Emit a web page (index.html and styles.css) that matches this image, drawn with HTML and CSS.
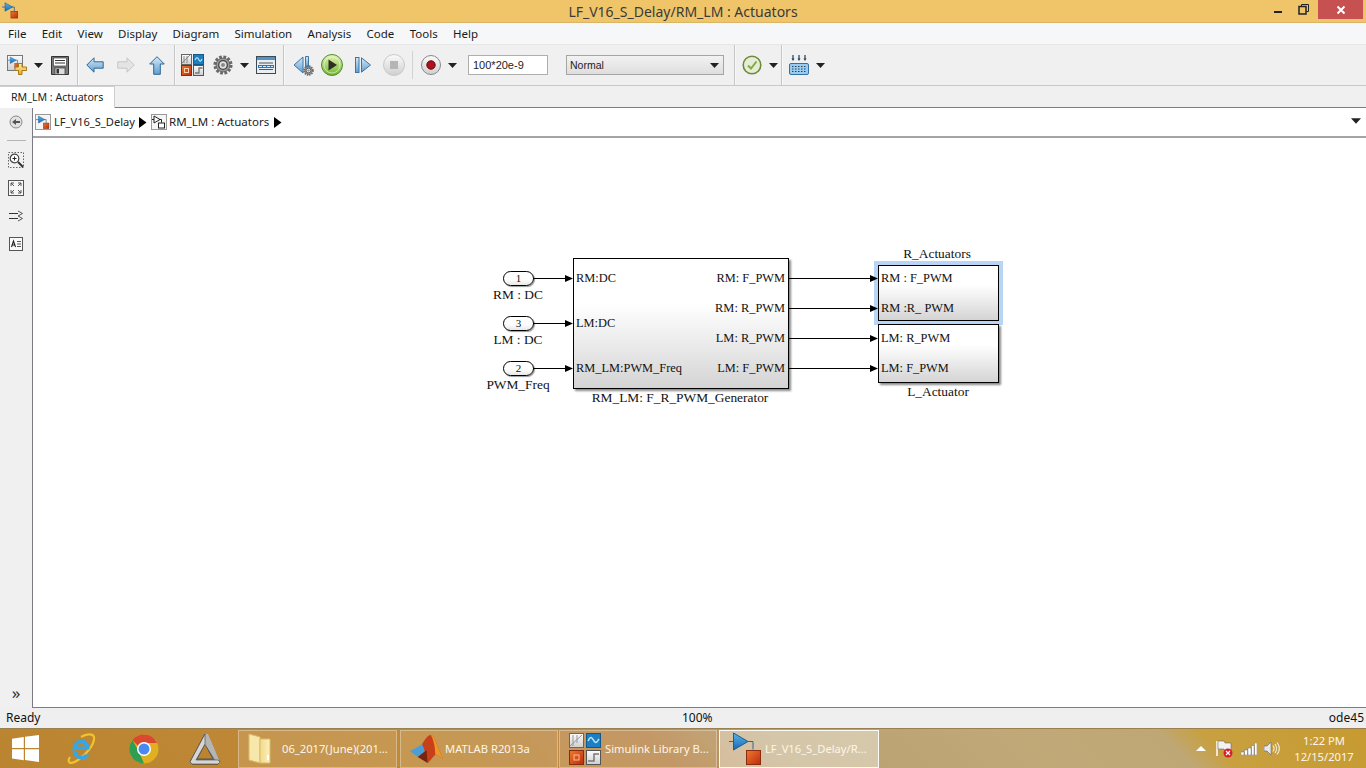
FILE: index.html
```html
<!DOCTYPE html>
<html lang="en">
<head>
<meta charset="utf-8">
<title>LF_V16_S_Delay/RM_LM : Actuators</title>
<link rel="stylesheet" href="styles.css">
</head>
<body>
<svg class="defs" width="0" height="0" aria-hidden="true">
  <defs>
    <linearGradient id="gBlue" x1="0" y1="0" x2="0" y2="1"><stop offset="0" stop-color="#d6e8f6"/><stop offset="1" stop-color="#5f9fd0"/></linearGradient>
    <linearGradient id="gTri" x1="0" y1="0" x2="0" y2="1"><stop offset="0" stop-color="#5bb4ea"/><stop offset="1" stop-color="#1469b4"/></linearGradient>
    <linearGradient id="gRed" x1="0" y1="0" x2="1" y2="1"><stop offset="0" stop-color="#ef7a2c"/><stop offset="1" stop-color="#bb2a10"/></linearGradient>
    <linearGradient id="gGreen" x1="0" y1="0" x2="0" y2="1"><stop offset="0" stop-color="#e6f5b8"/><stop offset="1" stop-color="#6fb52c"/></linearGradient>
    <linearGradient id="gGrey" x1="0" y1="0" x2="0" y2="1"><stop offset="0" stop-color="#fbfbfb"/><stop offset="1" stop-color="#cfcfcf"/></linearGradient>
    <linearGradient id="gYellow" x1="0" y1="0" x2="0" y2="1"><stop offset="0" stop-color="#fff1a8"/><stop offset="1" stop-color="#e8a920"/></linearGradient>
    <linearGradient id="gFolder" x1="0" y1="0" x2="1" y2="0"><stop offset="0" stop-color="#f2d98a"/><stop offset="1" stop-color="#fdf0bd"/></linearGradient>
    <symbol id="sl" viewBox="0 0 20 20">
      <path d="M0 6.500h4M11 6.500h3.500v6" fill="none" stroke="#35678f" stroke-width="1"/>
      <path d="M3.500 1.500 12.500 6.500 3.500 11.500Z" fill="url(#gTri)" stroke="#1b5d98" stroke-width=".7"/>
      <rect x="10.500" y="11.500" width="8" height="8" fill="url(#gRed)" stroke="#8a2b10" stroke-width=".7"/>
    </symbol>
    <symbol id="caret" viewBox="0 0 9 5"><path d="M0 0h9L4.500 5Z" fill="#222"/></symbol>
    <symbol id="crumb" viewBox="0 0 8 11"><path d="M0 0 7.500 5.500 0 11Z" fill="#000"/></symbol>
    <symbol id="gear" viewBox="0 0 20 20">
      <circle cx="10" cy="10" r="7.800" fill="none" stroke="#6a6a6a" stroke-width="3.600" stroke-dasharray="2.600 1.500"/>
      <circle cx="10" cy="10" r="7" fill="#9a9a9a" stroke="#555" stroke-width=".8"/>
      <circle cx="10" cy="10" r="4.300" fill="#e4e4e4" stroke="#444" stroke-width="1.300"/>
      <circle cx="10" cy="10" r="2" fill="#8a8a8a"/>
    </symbol>
  </defs>
</svg>

<div class="app">
  <header class="titlebar">
    <svg class="title-icon"><use href="#sl"/></svg>
    <h1 class="title-text">LF_V16_S_Delay/RM_LM : Actuators</h1>
    <div class="winctl">
      <span class="win-min"></span>
      <span class="win-max"><svg width="11" height="11" viewBox="0 0 11 11"><path d="M3.500 2V.5h7v7H8.500" fill="none" stroke="#222"/><rect x="1" y="2.500" width="7" height="7.500" fill="none" stroke="#222" stroke-width="1.500"/></svg></span>
      <span class="win-close"><svg width="10" height="10" viewBox="0 0 10 10"><path d="M1.500 1.500l7 7M8.500 1.500l-7 7" stroke="#fff" stroke-width="2"/></svg></span>
    </div>
  </header>

  <nav class="menubar">
    <span class="menu-item">File</span><span class="menu-item">Edit</span><span class="menu-item">View</span><span class="menu-item">Display</span><span class="menu-item">Diagram</span><span class="menu-item">Simulation</span><span class="menu-item">Analysis</span><span class="menu-item">Code</span><span class="menu-item">Tools</span><span class="menu-item">Help</span>
  </nav>

  <div class="toolbar">
    <svg class="tool ml7" width="20" height="20" viewBox="0 0 20 20"><rect x=".5" y=".5" width="15" height="15" fill="url(#gGrey)" stroke="#777"/><use href="#sl" x="1" y="1" width="13" height="13"/><path d="M11.500 8.500h3.500v3.500h4.500v3.500H15v4h-3.500v-4H8v-3.500h3.500Z" fill="url(#gYellow)" stroke="#a9791a"/></svg>
    <svg class="caret ml7"><use href="#caret"/></svg>
    <svg class="tool ml8" width="18" height="19" viewBox="0 0 18 19"><path d="M.5.5h17v18H.5Z" fill="#7b7b7b" stroke="#333"/><rect x="2.500" y="2" width="13" height="8" fill="#fff" stroke="#444" stroke-width=".7"/><path d="M4 4.500h10M4 7h10" stroke="#333"/><rect x="4" y="12" width="10" height="6.500" fill="#ddd" stroke="#333" stroke-width=".7"/><rect x="5.500" y="13" width="2.500" height="4.500" fill="#333"/></svg>
    <span class="sep ml8"></span>
    <svg class="tool ml8" width="18" height="16" viewBox="0 0 18 16"><path d="M.8 8 8 .8v4h9.200v6.400H8v4Z" fill="url(#gBlue)" stroke="#2f6797"/></svg>
    <svg class="tool ml13" width="18" height="16" viewBox="0 0 18 16"><path d="M17.200 8 10 .8v4H.8v6.400H10v4Z" fill="#e4e4e4" stroke="#c5c5c5"/></svg>
    <svg class="tool ml14" width="16" height="19" viewBox="0 0 16 19"><path d="M8 .7 15.300 8h-4v10.300H4.700V8h-4Z" fill="url(#gBlue)" stroke="#2f6797"/></svg>
    <span class="sep ml9"></span>
    <svg class="tool ml6" width="23" height="22" viewBox="0 0 23 22"><rect x=".5" y=".5" width="10" height="10" fill="url(#gGrey)" stroke="#666"/><path d="M1 9 9 1M3 2v7M6 2v7" stroke="#888" fill="none"/><rect x="12.500" y=".5" width="10" height="10" fill="#1e7fc0" stroke="#14598a"/><path d="M14 6c2-4 3-2 4 0s2 1 3-1" fill="none" stroke="#bfe4fa" stroke-width="1.200"/><rect x=".5" y="11.500" width="10" height="10" fill="url(#gRed)" stroke="#8a2b10"/><rect x="3.500" y="14.500" width="4" height="4" fill="none" stroke="#fbd0a8"/><rect x="12.500" y="11.500" width="10" height="10" fill="url(#gGrey)" stroke="#555"/><path d="M14 19h4v-5h3.500" fill="none" stroke="#777" stroke-width="1.300"/></svg>
    <svg class="tool ml9" width="20" height="20"><use href="#gear"/></svg>
    <svg class="caret ml7"><use href="#caret"/></svg>
    <svg class="tool ml7" width="20" height="18" viewBox="0 0 20 18"><rect x=".5" y=".5" width="19" height="17" fill="#e8eef2" stroke="#3c4a55"/><rect x="1" y="1" width="18" height="3" fill="#4f94c4"/><path d="M3 7h14M3 13.500h14" stroke="#555"/><rect x="2" y="9" width="16" height="3" fill="#2a78b8"/><path d="M3 10.500h14" stroke="#d8ecf8" stroke-dasharray="3 1"/></svg>
    <span class="sep ml7"></span>
    <svg class="tool ml9" width="22" height="22" viewBox="0 0 22 22"><path d="M10 3 1 11l9 8Z" fill="url(#gBlue)" stroke="#3c76a6"/><path d="M12.500 2.500h3v10h-3Z" fill="url(#gBlue)" stroke="#3c76a6"/><use href="#gear" x="10" y="11" width="11" height="11"/></svg>
    <svg class="tool ml6" width="22" height="22" viewBox="0 0 22 22"><circle cx="11" cy="11" r="10.500" fill="url(#gGreen)" stroke="#4f8f2a"/><circle cx="11" cy="11" r="8" fill="none" stroke="#f2fadf" stroke-opacity=".6"/><path d="M7.500 5.500 16 11l-8.500 5.500Z" fill="#2c2f24"/></svg>
    <svg class="tool ml12" width="16" height="16" viewBox="0 0 16 16"><rect x=".5" y=".5" width="3.500" height="15" fill="url(#gBlue)" stroke="#3c76a6"/><path d="M6.500.8 15.500 8l-9 7.200Z" fill="url(#gBlue)" stroke="#3c76a6"/></svg>
    <svg class="tool ml12" width="22" height="22" viewBox="0 0 22 22"><circle cx="11" cy="11" r="10.500" fill="url(#gGrey)" stroke="#c9c9c9"/><rect x="7" y="7" width="8" height="8" fill="#b5b5b5"/></svg>
    <span class="sep-thin ml7"></span>
    <svg class="tool ml8" width="20" height="20" viewBox="0 0 20 20"><circle cx="10" cy="10" r="9.500" fill="url(#gGrey)" stroke="#888"/><circle cx="10" cy="10" r="4.200" fill="#b3101c" stroke="#5c0a10"/></svg>
    <svg class="caret ml7"><use href="#caret"/></svg>
    <input class="stoptime ml11" type="text" value="100*20e-9" aria-label="Stop time">
    <div class="mode ml18"><span>Normal</span><svg class="caret"><use href="#caret"/></svg></div>
    <span class="sep ml10"></span>
    <svg class="tool ml7" width="20" height="20" viewBox="0 0 20 20"><circle cx="10" cy="10" r="8.800" fill="#e6ecd6" stroke="#6b8a3a" stroke-width="1.600"/><path d="M6 10.500l3 3 5.500-7" fill="none" stroke="#7cae3c" stroke-width="2"/></svg>
    <svg class="caret ml7"><use href="#caret"/></svg>
    <span class="sep ml3"></span>
    <svg class="tool ml7" width="20" height="20" viewBox="0 0 20 20"><rect x=".5" y="8.500" width="19" height="11" rx="1.500" fill="#9ecbec" stroke="#2f72a8"/><path d="M3 11.500h14M3 14h14M3 16.500h14" stroke="#16486f" stroke-width="1.200" stroke-dasharray="1.500 1.500"/><path d="M4 0v4M10 0v4M16 0v4" stroke="#1f3f5c" stroke-width="1.200"/><path d="M2.500 3.500h3L4 6ZM8.500 3.500h3L10 6ZM14.500 3.500h3L16 6Z" fill="#1f3f5c"/></svg>
    <svg class="caret ml7"><use href="#caret"/></svg>
  </div>

  <div class="tabrow"><span class="tab">RM_LM : Actuators</span></div>

  <div class="workspace">
    <aside class="sidebar">
      <svg class="side-icon" width="14" height="14" viewBox="0 0 14 14"><circle cx="7" cy="7" r="6" fill="#e2e2e2" stroke="#888"/><path d="M3 7l4-3v2h4v2H7v2Z" fill="#555"/></svg>
      <span class="side-sep"></span>
      <svg class="side-icon" width="16" height="16" viewBox="0 0 16 16"><rect x=".5" y=".5" width="15" height="15" fill="none" stroke="#666" stroke-dasharray="1.500 1.500"/><circle cx="6.500" cy="6.500" r="4.300" fill="#fff" stroke="#444" stroke-width="1.200"/><path d="M4.500 6.500h4M6.500 4.500v4" stroke="#222"/><path d="M10 10l5 5" stroke="#333" stroke-width="2"/></svg>
      <svg class="side-icon" width="16" height="16" viewBox="0 0 16 16"><rect x=".5" y=".5" width="15" height="15" fill="#f6f6f6" stroke="#555"/><path d="M3 6V3h3M3 3l3 3M13 6V3h-3M13 3l-3 3M3 10v3h3M3 13l3-3M13 10v3h-3M13 13l-3-3" fill="none" stroke="#555"/></svg>
      <svg class="side-icon" width="16" height="16" viewBox="0 0 16 16"><path d="M1 5.500h12M1 10.500h12" stroke="#333"/><path d="M10 3l4.500 2.500L10 8M10 8l4.500 2.500L10 13" fill="#f0f0f0" stroke="#555"/></svg>
      <svg class="side-icon side-text" width="14" height="14" viewBox="0 0 14 14"><rect x=".5" y=".5" width="13" height="13" fill="#fafafa" stroke="#555"/><path d="M2.500 10 4.500 4l2 6M3.300 8h2.500" fill="none" stroke="#222" stroke-width="1.100"/><path d="M8 4.500h4M8 7h4M8 9.500h4" stroke="#555"/></svg>
      <span class="side-more">»</span>
    </aside>

    <main class="editor">
      <div class="breadcrumb">
        <span class="crumb-btn"><svg width="14" height="14"><use href="#sl"/></svg></span>
        <span class="crumb-text">LF_V16_S_Delay</span>
        <svg class="crumb-arrow crumb-arrow-first"><use href="#crumb"/></svg>
        <span class="crumb-btn crumb-second"><svg width="14" height="14" viewBox="0 0 14 14"><path d="M0 4.500h2M7 4.500h2.500v3M2 1l6 3.500L2 8Z" fill="#fff" stroke="#222"/><rect x="6.500" y="8" width="6" height="5" fill="#fff" stroke="#222"/></svg></span>
        <span class="crumb-text crumb-text-second">RM_LM : Actuators</span>
        <svg class="crumb-arrow"><use href="#crumb"/></svg>
        <svg class="crumb-menu"><use href="#caret"/></svg>
      </div>

      <div class="canvas">
        <svg class="wires" width="1333" height="570" viewBox="33 138 1333 570">
          <g class="wire">
            <path d="M533 278.500h36M533 323.500h36M533 368.500h36M789 278.500h85M789 308.500h85M789 338.500h85M789 368.500h85"/>
          </g>
          <g class="head">
            <path d="M565 275l8 3.500-8 3.500ZM565 320l8 3.500-8 3.500ZM565 365l8 3.500-8 3.500ZM870 275l8 3.500-8 3.500ZM870 305l8 3.500-8 3.500ZM870 335l8 3.500-8 3.500ZM870 365l8 3.500-8 3.500Z"/>
          </g>
        </svg>

        <div class="inport in-a">1</div>
        <div class="inport in-b">3</div>
        <div class="inport in-c">2</div>
        <div class="lbl lbl-a">RM : DC</div>
        <div class="lbl lbl-b">LM : DC</div>
        <div class="lbl lbl-c">PWM_Freq</div>

        <div class="block gen">
          <div class="ports">
            <span>RM:DC</span><span>LM:DC</span><span>RM_LM:PWM_Freq</span>
          </div>
          <div class="ports ports-out">
            <span>RM: F_PWM</span><span>RM: R_PWM</span><span>LM: R_PWM</span><span>LM: F_PWM</span>
          </div>
        </div>
        <div class="lbl lbl-gen">RM_LM: F_R_PWM_Generator</div>

        <div class="lbl lbl-r">R_Actuators</div>
        <div class="block act-r"><span>RM : F_PWM</span><span>RM :R_ PWM</span></div>
        <div class="block act-l"><span>LM: R_PWM</span><span>LM: F_PWM</span></div>
        <div class="lbl lbl-l">L_Actuator</div>
      </div>
    </main>
  </div>

  <footer class="statusbar">
    <span class="st-left">Ready</span>
    <span class="st-mid">100%</span>
    <span class="st-right">ode45</span>
  </footer>

  <div class="taskbar">
    <svg class="tb-start" width="27" height="27" viewBox="0 0 27 27"><path d="M0 3.800 11.800 2v11H0ZM13 1.800 27 0v13H13ZM0 14.200h11.800v11L0 23.500ZM13 14.200h14V27l-14-2Z" fill="#fff"/></svg>
    <svg class="tb-ie" width="32" height="32" viewBox="0 0 32 32"><path d="M5 24C1 30 6 32 13 27 21 22 30 11 29 4 28 0 21 1 16 4" fill="none" stroke="#f1c22b" stroke-width="2.200"/><path d="M7.500 16.500h17c.5-6-3-10-8-10s-9 4-9 10 4 10 9 10c4 0 7-2 8-5h-5c-1 1-2 1.500-3 1.500-2.500 0-4.500-2-4.500-4.500M12 13.500c.5-2 2-3 4.200-3s3.500 1 3.800 3Z" fill="#35a6e6" fill-rule="evenodd"/></svg>
    <svg class="tb-chrome" width="30" height="30" viewBox="0 0 30 30"><circle cx="15" cy="15" r="14.500" fill="#e0b020"/><path d="M15 .5A14.500 14.500 0 0 1 28 9H15a6 6 0 0 0-5.500 3.500L3.500 6A14.500 14.500 0 0 1 15 .5Z" fill="#d9482f"/><path d="M3.500 6l6.500 12 5 11.500A14.500 14.500 0 0 1 3.500 6Z" fill="#2f9e52"/><circle cx="15" cy="15" r="7" fill="#fff"/><circle cx="15" cy="15" r="5.500" fill="#4a8af0"/></svg>
    <svg class="tb-pen" width="32" height="32" viewBox="0 0 32 32"><path d="M16 1 31 29l-2 2H3l-2-2Z" fill="#7f7f7f" stroke="#4a4a4a"/><path d="M16 11 24 26H8Z" fill="#bd842f" stroke="#555"/><path d="M16 1l3 0 12 28-2 2-13-20Z" fill="#b5b5b5"/><path d="M1 29l15-28v10L7 27h22l2 2-2 2H3Z" fill="#d6d6d6" stroke="#444" stroke-width=".6"/></svg>

    <div class="tb-btn tb-first">
      <svg width="24" height="32" viewBox="0 0 24 32"><path d="M1 1 12 4v26L1 27Z" fill="#f8e7ab" stroke="#d8bb6c"/><path d="M12 6h10v24H12Z" fill="url(#gFolder)" stroke="#d8bb6c"/><rect x="19" y="22" width="2" height="5" fill="#fff"/></svg>
      <span class="tb-label lab-folder">06_2017(June)(201...</span>
    </div>
    <div class="tb-btn tb-matlab">
      <svg width="33" height="30" viewBox="0 0 30 30" preserveAspectRatio="none"><path d="M0 17 7 13l4-3 4 6-8 7Z" fill="#4a9fd8"/><path d="M11 10C14 5 16 1 19 1c3 0 6 12 11 24-3-2-5-5-7-4-2 1-5 7-7 8-1-7-3-14-5-19Z" fill="#c8401a"/><path d="M19 1c3 0 6 12 11 24-3-2-5-5-7-4C23 12 21 5 19 1Z" fill="#f0962a"/><path d="M7 23l8-7 1 13Z" fill="#7a2410"/></svg>
      <span class="tb-label lab-matlab">MATLAB R2013a</span>
    </div>
    <div class="tb-btn tb-lib">
      <svg width="32" height="32" viewBox="0 0 32 32"><rect x=".5" y=".5" width="14" height="14" fill="url(#gGrey)" stroke="#666"/><path d="M1 13 13 2M4 2v11M8 2v8" stroke="#999" fill="none"/><rect x="17.500" y=".5" width="14" height="14" fill="#1a7fc4" stroke="#11598a"/><path d="M19 8c3-6 4-3 6 0s3 1 5-2" fill="none" stroke="#bfe4fa" stroke-width="1.500"/><rect x=".5" y="17.500" width="14" height="14" fill="url(#gRed)" stroke="#8a2b10"/><rect x="5" y="22" width="5" height="5" fill="none" stroke="#f6c091"/><rect x="17.500" y="17.500" width="14" height="14" fill="url(#gGrey)" stroke="#555"/><path d="M19 28h6v-7h5" fill="none" stroke="#777" stroke-width="1.500"/></svg>
      <span class="tb-label lab-lib">Simulink Library B...</span>
    </div>
    <div class="tb-btn tb-active">
      <svg width="32" height="34" viewBox="0 0 32 34"><path d="M0 9.500h4M19 9.500h5v8" fill="none" stroke="#35678f"/><path d="M4.500 1 19 9.500 4.500 18Z" fill="url(#gTri)" stroke="#1b5d98"/><rect x="17.500" y="18.500" width="14" height="14" fill="url(#gRed)" stroke="#8a2b10"/></svg>
      <span class="tb-label lab-active">LF_V16_S_Delay/R...</span>
    </div>

    <div class="tray">
      <svg class="tray-up" width="10" height="5" viewBox="0 0 10 5"><path d="M0 5h10L5 0Z" fill="#fff"/></svg>
      <svg class="tray-flag" width="17" height="18" viewBox="0 0 17 18"><path d="M1 1v15" stroke="#fff" stroke-width="1.500"/><path d="M2 1h6l1 2h6v8H9L8 9H2Z" fill="#f2f2f2" stroke="#555" stroke-width=".5"/><circle cx="12" cy="13" r="4.500" fill="#d81e2a"/><path d="M10 11l4 4M14 11l-4 4" stroke="#fff" stroke-width="1.200"/></svg>
      <svg class="tray-net" width="16" height="12" viewBox="0 0 16 12"><path d="M0 9h3v3H0ZM3.500 7h3v5h-3ZM7 5h3v7H7ZM10.500 2.500h2.500V12h-2.500ZM13.500 0H16v12h-2.500Z" fill="#fff" stroke="#5c5c5c" stroke-width=".4"/></svg>
      <svg class="tray-vol" width="16" height="15" viewBox="0 0 16 15"><path d="M0 5h3l4-4v13l-4-4H0Z" fill="#e8e8e8" stroke="#555" stroke-width=".5"/><path d="M9 4.500c1.500 2 1.500 4 0 6M11 3c2 3 2 6 0 9M13 1.500c3 4 3 8 0 12" fill="none" stroke="#fff"/></svg>
      <div class="clock"><span>1:22 PM</span><span>12/15/2017</span></div>
    </div>
  </div>
</div>
</body>
</html>
```

FILE: styles.css
```css
* { box-sizing: border-box; }
html, body { margin: 0; padding: 0; width: 1366px; height: 768px; overflow: hidden; }
body { font-family: "Noto Sans", "Open Sans", sans-serif; font-size: 12px; color: #111; background: #f0f0f0; }
.defs { position: absolute; }
svg { display: block; flex: none; }

.app { display: flex; flex-direction: column; width: 1366px; height: 768px; }

/* title bar */
.titlebar { position: relative; height: 23px; flex: none; background: #f0c56a; border-bottom: 1px solid #d9b565; display: flex; align-items: center; justify-content: center; }
.title-icon { position: absolute; left: 2px; top: 1px; width: 17px; height: 18px; }
.title-text { margin: 1px 0 0; font-size: 14px; font-weight: 400; color: #3a3a3a; line-height: 20px; }
.winctl { position: absolute; right: 3px; top: 0; display: flex; align-items: flex-start; }
.win-min { width: 8px; height: 2px; margin: 11px 16px 0 0; background: #222; }
.win-max { margin: 4px 9px 0 0; }
.win-close { width: 45px; height: 19px; background: #c75050; display: flex; align-items: center; justify-content: center; }

/* menu */
.menubar { height: 21px; flex: none; background: #f6f7f8; display: flex; align-items: center; padding-left: 8px; gap: 0; }
.menu-item { margin-right: 15.300px; line-height: 20px; font-size: 11.500px; color: #1a1a1a; }

/* toolbar */
.toolbar { height: 42px; flex: none; background: #f0f0f0; border-top: 1px solid #e6e6e6; border-bottom: 1px solid #c8c8c8; display: flex; align-items: center; }
.caret { width: 9px; height: 5px; }
.sep { width: 1px; align-self: stretch; background: #c6c6c6; box-shadow: 1px 0 0 #f8f8f8; }
.sep-thin { width: 1px; height: 28px; background: #d2d2d2; }
.ml3 { margin-left: 3px; } .ml6 { margin-left: 6px; } .ml7 { margin-left: 7px; } .ml8 { margin-left: 8px; } .ml9 { margin-left: 9px; }
.ml10 { margin-left: 10px; } .ml11 { margin-left: 11px; } .ml12 { margin-left: 12px; } .ml13 { margin-left: 13px; } .ml14 { margin-left: 14px; } .ml18 { margin-left: 18px; }
.stoptime { width: 80px; height: 20px; border: 1px solid #aeaeae; background: #fff; padding: 0 4px; font: 11px "Liberation Sans", Arial, sans-serif; color: #222; outline: none; }
.mode { width: 158px; height: 20px; border: 1px solid #a5a5a5; background: linear-gradient(#f2f2f2, #dedede); display: flex; align-items: center; justify-content: space-between; padding: 0 4px 0 3px; color: #222; font: 10.500px "Liberation Sans", Arial, sans-serif; }
.mode span { line-height: 16px; }

/* tabs */
.tabrow { height: 22px; flex: none; background: #f0f0f0; display: flex; border-bottom: 1px solid #7c7c84; }
.tab { width: 115px; height: 22px; background: #fff; border: 1px solid #cfcfcf; border-left: 0; border-bottom: 0; padding-left: 11px; line-height: 21px; font-size: 10.600px; color: #222; }

/* workspace */
.workspace { flex: 1; display: flex; min-height: 0; }
.sidebar { width: 32px; flex: none; background: #f0f0f0; display: flex; flex-direction: column; align-items: center; padding-top: 7px; }
.side-icon { margin-bottom: 12px; }
.side-text { margin-top: 1px; }
.side-sep { width: 19px; height: 1px; background: #b5b5b5; margin: -1px 0 11px; }
.side-more { margin-top: auto; margin-bottom: 5px; font-size: 17px; line-height: 20px; color: #333; }
.editor { flex: 1; display: flex; flex-direction: column; border-left: 1px solid #7c7c84; border-bottom: 1px solid #7c7c84; min-width: 0; }
.breadcrumb { height: 30px; flex: none; background: #fff; border-bottom: 2px solid #a3a3a8; display: flex; align-items: center; padding-left: 2px; position: relative; }
.crumb-btn { width: 16px; height: 16px; border: 1px solid #9a9a9a; background: #f5f5f5; display: flex; align-items: center; justify-content: center; }
.crumb-second { margin-left: 4px; }
.crumb-text { margin: 0 0 2px 3px; font-size: 11.100px; color: #222; width: 81px; white-space: nowrap; }
.crumb-text-second { margin-left: 2px; width: 100px; font-size: 11.500px; }
.crumb-arrow { width: 8px; height: 11px; margin-left: 5px; }
.crumb-arrow-first { margin-left: 4px; }
.crumb-menu { position: absolute; right: 5px; top: 10px; width: 10px; height: 6px; }

/* diagram canvas: a free canvas whose origin is (33, 138) */
.canvas { position: relative; flex: 1; background: #fff; overflow: hidden; font-family: "Liberation Serif", "Times New Roman", serif; font-size: 12.400px; color: #111; }
.wires { position: absolute; left: 0; top: 0; z-index: 3; pointer-events: none; }
.wire path { fill: none; stroke: #000; stroke-width: 1; }
.head path { fill: #000; }
.inport { position: absolute; width: 31px; height: 15px; left: 470px; border: 1px solid #000; border-radius: 8px; background: linear-gradient(#fff 55%, #e8e8e8); box-shadow: 1px 1px 1px #999; text-align: center; line-height: 13px; font-size: 11px; }
.in-a { top: 133px; } .in-b { top: 178px; } .in-c { top: 223px; }
.lbl { position: absolute; text-align: center; white-space: nowrap; line-height: 14px; font-size: 13.400px; }
.lbl-a, .lbl-b, .lbl-c { left: 425px; width: 120px; }
.lbl-a { top: 150px; } .lbl-b { top: 195px; } .lbl-c { top: 240px; }
.lbl-gen { left: 507px; width: 280px; top: 253px; }
.lbl-r { left: 844px; width: 120px; top: 109px; }
.lbl-l { left: 845px; width: 120px; top: 247px; }
.block { position: absolute; border: 1px solid #000; background: linear-gradient(#fff 35%, #d4d4d4); box-shadow: 2px 2px 2px #8a8a8a; white-space: nowrap; }
.gen { left: 540px; top: 120px; width: 216px; height: 131px; display: flex; justify-content: space-between; padding: 0 3px 0 2px; }
.ports { display: flex; flex-direction: column; padding-top: 12px; gap: 31px; }
.ports span, .act-r span, .act-l span { line-height: 14px; }
.ports-out { align-items: flex-end; gap: 16px; }
.act-r, .act-l { left: 845px; width: 121px; display: flex; flex-direction: column; gap: 16px; padding-left: 2px; }
.act-r { top: 127px; height: 56px; padding-top: 5px; outline: 4px solid #b9d5f5; box-shadow: none; z-index: 1; }
.act-l { top: 186px; height: 59px; padding-top: 6px; z-index: 2; }

/* status bar */
.statusbar { height: 20px; flex: none; background: #efefef; position: relative; display: flex; align-items: center; justify-content: space-between; padding: 0 2px 0 6px; line-height: 18px; color: #111; }
.st-mid { position: absolute; left: 682px; }

/* taskbar */
.taskbar { height: 40px; flex: none; display: flex; align-items: center; position: relative; color: #fff; background: linear-gradient(45deg, #bb8430 0, #bf8a3a 325px, #bb8a52 481px, #b8a070 566px, #c0a878 735px, #bfa775 845px, #c8a040 875px, #c79a30 1000px); border-top: 1px solid #9a8050; }
.tb-start { margin-left: 12px; }
.tb-ie { margin-left: 26px; }
.tb-chrome { margin-left: 32px; }
.tb-pen { margin-left: 30px; }
.tb-btn { height: 38px; display: flex; align-items: center; border: 1px solid rgba(255,255,255,.32); background: rgba(255,255,255,.12); flex: none; margin-left: 2px; }
.tb-first { width: 159px; margin-left: 17px; padding-left: 9px; }
.tb-matlab { width: 158px; margin-left: 3px; padding-left: 9px; }
.tb-lib { width: 158px; margin-left: 1px; padding-left: 9px; }
.tb-active { width: 160px; margin-left: 2px; padding-left: 9px; background: rgba(255,255,255,.4); border-color: rgba(255,255,255,.9); }
.tb-label { font-size: 11.200px; white-space: nowrap; color: #fdf6e8; }
.lab-folder { margin-left: 10px; } .lab-matlab { margin-left: 2px; } .lab-lib { margin-left: 4px; } .lab-active { margin-left: 4px; }
.tray { margin-left: auto; display: flex; align-items: center; height: 38px; }
.tray-flag { margin-left: 10px; }
.tray-net { margin-left: 8px; }
.tray-vol { margin-left: 7px; }
.clock { width: 72px; margin-left: 8px; margin-right: 6px; display: flex; flex-direction: column; align-items: center; font-size: 11.200px; line-height: 16px; color: #fdf6e8; }
```
